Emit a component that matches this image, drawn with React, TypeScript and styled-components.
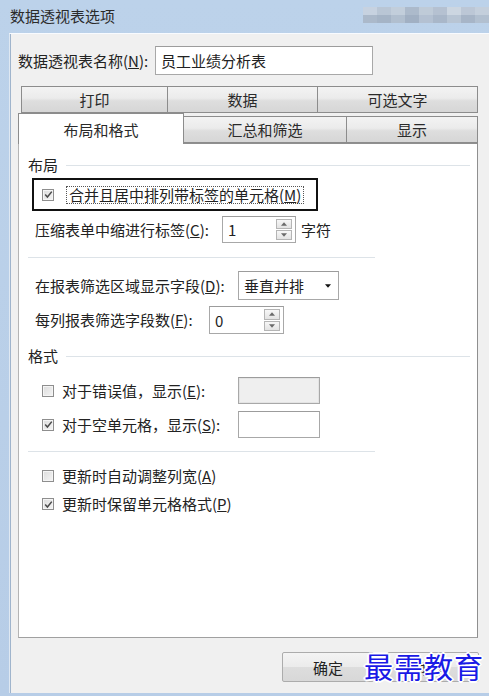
import React from "react";
import styled, { createGlobalStyle } from "styled-components";

const GlobalStyle = createGlobalStyle`
  html, body { margin: 0; padding: 0; }
  body {
    width: 489px;
    height: 696px;
    overflow: hidden;
    font-family: "Noto Sans CJK SC", "Noto Sans", sans-serif;
    color: #222;
  }
`;

const Frame = styled.div`
  position: relative;
  width: 489px;
  height: 696px;
  display: flex;
  flex-direction: column;
  background: linear-gradient(180deg, #bcd2ea 0%, #b7cde7 100%);
  overflow: hidden;
`;

const TitleBar = styled.div`
  height: 33px;
  display: flex;
  align-items: center;
  justify-content: space-between;
  padding-left: 10px;
  font-size: 15px;
  color: #2b2b2b;
  flex-shrink: 0;
`;

const TitleText = styled.span`
  line-height: 1;
  margin-top: -2px;
`;

const Blur = styled.div`
  display: grid;
  grid-template-columns: repeat(9, 14px);
  grid-template-rows: 8px 8px;
  margin-top: -4px;
  opacity: 0.85;
`;

const BlurCell = styled.div<{ $c: string }>`
  background: ${(p) => p.$c};
`;

const Body = styled.div`
  flex: 1;
  margin-left: 9px;
  margin-bottom: 3px;
  background: #f0f0f0;
  border-top: 1px solid #f8fbff;
  border-left: 1px solid #dfe8f2;
  box-shadow: inset 1px 0 0 #9fb4cc;
  display: flex;
  flex-direction: column;
  padding: 12px 10px 11px 8px;
`;

const NameRow = styled.div`
  display: flex;
  align-items: center;
  height: 29px;
`;

const Label = styled.span<{ $w?: number }>`
  font-size: 15px;
  line-height: 20px;
  white-space: nowrap;
  ${(p) => (p.$w ? `width: ${p.$w}px; flex-shrink: 0;` : "")}
`;

const U = styled.span`
  text-decoration: underline;
`;

const TextBox = styled.div<{ $w: number; $h: number; $disabled?: boolean }>`
  width: ${(p) => p.$w}px;
  height: ${(p) => p.$h}px;
  box-sizing: border-box;
  border: 1px solid #a8a8a8;
  border-top-color: #9c9c9c;
  background: ${(p) => (p.$disabled ? "#efefef" : "#fff")};
  box-shadow: ${(p) => (p.$disabled ? "inset 0 0 0 1px #e4e4e4" : "none")};
  display: flex;
  align-items: center;
  padding-left: 5px;
  font-size: 15px;
  position: relative;
`;

const TabStrip = styled.div`
  margin-top: 11px;
  display: flex;
  flex-direction: column;
  width: 460px;
`;

const TabRow = styled.div<{ $offset: number }>`
  display: flex;
  align-items: flex-end;
  margin-left: ${(p) => p.$offset}px;
  height: ${(p) => (p.$offset ? 27 : 30)}px;
`;

const Tab = styled.div<{ $w: number; $active?: boolean }>`
  width: ${(p) => p.$w}px;
  height: ${(p) => (p.$active ? 31 : 27)}px;
  box-sizing: border-box;
  flex-shrink: 0;
  display: flex;
  align-items: center;
  justify-content: center;
  font-size: 15px;
  color: #2a2a2a;
  border: 1px solid #8c8c8c;
  border-left-width: ${(p) => (p.$active ? 1 : 0)}px;
  border-bottom: ${(p) => (p.$active ? "none" : "1px solid #8c8c8c")};
  background: ${(p) =>
    p.$active
      ? "#ffffff"
      : "linear-gradient(180deg, #f3f3f3 0%, #ebebeb 45%, #dedede 55%, #d6d6d6 100%)"};
  position: relative;
  z-index: ${(p) => (p.$active ? 2 : 1)};
  margin-bottom: ${(p) => (p.$active ? -1 : 0)}px;
  &:first-child {
    border-left-width: 1px;
  }
`;

const Panel = styled.div`
  flex: 1;
  width: 460px;
  box-sizing: border-box;
  background: #fff;
  border: 1px solid #8f8f8f;
  border-bottom-color: #a0a0a0;
  border-left-color: #b4b4b4;
  padding: 11px 7px 0 9px;
  display: flex;
  flex-direction: column;
`;

const SectionHeader = styled.div<{ $mt: number }>`
  display: flex;
  align-items: center;
  gap: 8px;
  height: 18px;
  margin-top: ${(p) => p.$mt}px;
`;

const Rule = styled.div`
  flex: 1;
  height: 1px;
  background: #dde3e8;
`;

const Separator = styled.div<{ $mt: number }>`
  width: 347px;
  height: 1px;
  background: #dde3e8;
  margin-top: ${(p) => p.$mt}px;
`;

const Highlight = styled.div`
  margin-top: 4px;
  margin-left: 4px;
  width: 286px;
  height: 33px;
  box-sizing: border-box;
  border: 2px solid #111;
  display: flex;
  align-items: center;
  padding-left: 8px;
  gap: 4px;
`;

const FocusText = styled.span`
  font-size: 15px;
  line-height: 16px;
  padding: 0 2px;
  border: 1px dotted #555;
  white-space: nowrap;
`;

const Row = styled.div<{ $mt: number; $h: number; $pl: number }>`
  display: flex;
  align-items: center;
  margin-top: ${(p) => p.$mt}px;
  height: ${(p) => p.$h}px;
  padding-left: ${(p) => p.$pl}px;
`;

const CheckBox = styled.div`
  width: 12px;
  height: 12px;
  box-sizing: border-box;
  border: 1px solid #8e8e8e;
  background: linear-gradient(135deg, #dcdcdc 0%, #f4f4f4 100%);
  box-shadow: inset 0 0 0 1px #f5f5f5;
  display: flex;
  align-items: center;
  justify-content: center;
  flex-shrink: 0;
  margin-right: 8px;
`;

const SpinWrap = styled.div`
  position: absolute;
  right: 3px;
  top: 2px;
  bottom: 2px;
  width: 16px;
  display: flex;
  flex-direction: column;
  gap: 1px;
`;

const SpinBtn = styled.div`
  flex: 1;
  box-sizing: border-box;
  border: 1px solid #b5b5b5;
  background: linear-gradient(180deg, #f7f7f7, #e3e3e3);
  display: flex;
  align-items: center;
  justify-content: center;
`;

const DropBtn = styled.div`
  position: absolute;
  right: 1px;
  top: 1px;
  bottom: 1px;
  width: 19px;
  display: flex;
  align-items: center;
  justify-content: center;
`;

const Suffix = styled.span`
  font-size: 15px;
  margin-left: 5px;
`;

const ButtonBar = styled.div`
  display: flex;
  justify-content: flex-end;
  gap: 13px;
  margin-top: 14px;
`;

const Button = styled.div`
  width: 92px;
  height: 30px;
  box-sizing: border-box;
  border: 1px solid #acacac;
  border-radius: 2px;
  background: linear-gradient(180deg, #f4f4f4 0%, #ebebeb 50%, #dddddd 51%, #d8d8d8 100%);
  display: flex;
  align-items: center;
  justify-content: center;
  font-size: 15px;
  color: #222;
`;

const Watermark = styled.div`
  position: absolute;
  left: 364px;
  top: 646px;
  font-size: 29px;
  line-height: 40px;
  letter-spacing: 1px;
  color: #1a1ae6;
  font-family: "Noto Sans CJK SC", sans-serif;
  font-weight: 400;
  text-shadow: -1px -1px 0 #fff, 1px -1px 0 #fff, -1px 1px 0 #fff, 1px 1px 0 #fff,
    0 2px 0 #fff, 0 -2px 0 #fff, 2px 0 0 #fff, -2px 0 0 #fff;
`;

const Check = () => (
  <svg width="9" height="9" viewBox="0 0 9 9">
    <path d="M1.2 4.6 L3.4 7 L7.8 1.6" fill="none" stroke="#4a4a4a" strokeWidth="1.5" />
  </svg>
);

const Tri = ({ up, size = 5, color = "#6a6a6a" }: { up?: boolean; size?: number; color?: string }) => (
  <svg width={size + 2} height={size} viewBox="0 0 7 4">
    <path d={up ? "M0 4 L3.5 0 L7 4 Z" : "M0 0 L3.5 4 L7 0 Z"} fill={color} />
  </svg>
);

const Spin = () => (
  <SpinWrap>
    <SpinBtn>
      <Tri up size={4} />
    </SpinBtn>
    <SpinBtn>
      <Tri size={4} />
    </SpinBtn>
  </SpinWrap>
);

const blurColors = [
  "#c9d3df", "#b9c4d2", "#c4ced9", "#aab6c6", "#c0cad6", "#b4bfcd", "#cfd7e0", "#bcc6d3", "#c6cfda",
  "#a9b5c5", "#a2afc0", "#b0bccb", "#9dabbd", "#b3bfce", "#a6b3c4", "#b8c3d1", "#a4b1c2", "#b1bdcc",
];

export default function App() {
  return (
    <>
      <GlobalStyle />
      <Frame>
        <TitleBar>
          <TitleText>数据透视表选项</TitleText>
          <Blur>
            {blurColors.map((c, i) => (
              <BlurCell key={i} $c={c} />
            ))}
          </Blur>
        </TitleBar>
        <Body>
          <NameRow>
            <Label $w={137}>
              数据透视表名称(<U>N</U>):
            </Label>
            <TextBox $w={218} $h={29}>
              员工业绩分析表
            </TextBox>
          </NameRow>

          <TabStrip>
            <TabRow $offset={3}>
              <Tab $w={147}>打印</Tab>
              <Tab $w={150}>数据</Tab>
              <Tab $w={160}>可选文字</Tab>
            </TabRow>
            <TabRow $offset={0}>
              <Tab $w={166} $active>
                布局和格式
              </Tab>
              <Tab $w={163}>汇总和筛选</Tab>
              <Tab $w={131}>显示</Tab>
            </TabRow>
          </TabStrip>

          <Panel>
            <SectionHeader $mt={1}>
              <Label>布局</Label>
              <Rule />
            </SectionHeader>

            <Highlight>
              <CheckBox>
                <Check />
              </CheckBox>
              <FocusText>
                合并且居中排列带标签的单元格(<U>M</U>)
              </FocusText>
            </Highlight>

            <Row $mt={5} $h={27} $pl={7}>
              <Label $w={187}>
                压缩表单中缩进行标签(<U>C</U>):
              </Label>
              <TextBox $w={74} $h={27}>
                1
                <Spin />
              </TextBox>
              <Suffix>字符</Suffix>
            </Row>

            <Separator $mt={14} />

            <Row $mt={13} $h={29} $pl={7}>
              <Label $w={203}>
                在报表筛选区域显示字段(<U>D</U>):
              </Label>
              <TextBox $w={101} $h={29}>
                垂直并排
                <DropBtn>
                  <Tri size={4} color="#111" />
                </DropBtn>
              </TextBox>
            </Row>

            <Row $mt={6} $h={28} $pl={7}>
              <Label $w={174}>
                每列报表筛选字段数(<U>F</U>):
              </Label>
              <TextBox $w={75} $h={28}>
                0
                <Spin />
              </TextBox>
            </Row>

            <SectionHeader $mt={13}>
              <Label>格式</Label>
              <Rule />
            </SectionHeader>

            <Row $mt={12} $h={27} $pl={14}>
              <CheckBox />
              <Label $w={176}>
                对于错误值，显示(<U>E</U>):
              </Label>
              <TextBox $w={82} $h={27} $disabled />
            </Row>

            <Row $mt={7} $h={27} $pl={14}>
              <CheckBox>
                <Check />
              </CheckBox>
              <Label $w={176}>
                对于空单元格，显示(<U>S</U>):
              </Label>
              <TextBox $w={82} $h={27} />
            </Row>

            <Separator $mt={13} />

            <Row $mt={14} $h={20} $pl={14}>
              <CheckBox />
              <Label>
                更新时自动调整列宽(<U>A</U>)
              </Label>
            </Row>

            <Row $mt={8} $h={20} $pl={14}>
              <CheckBox>
                <Check />
              </CheckBox>
              <Label>
                更新时保留单元格格式(<U>P</U>)
              </Label>
            </Row>
          </Panel>

          <ButtonBar>
            <Button>确定</Button>
            <Button>取消</Button>
          </ButtonBar>
        </Body>
        <Watermark>最需教育</Watermark>
      </Frame>
    </>
  );
}
